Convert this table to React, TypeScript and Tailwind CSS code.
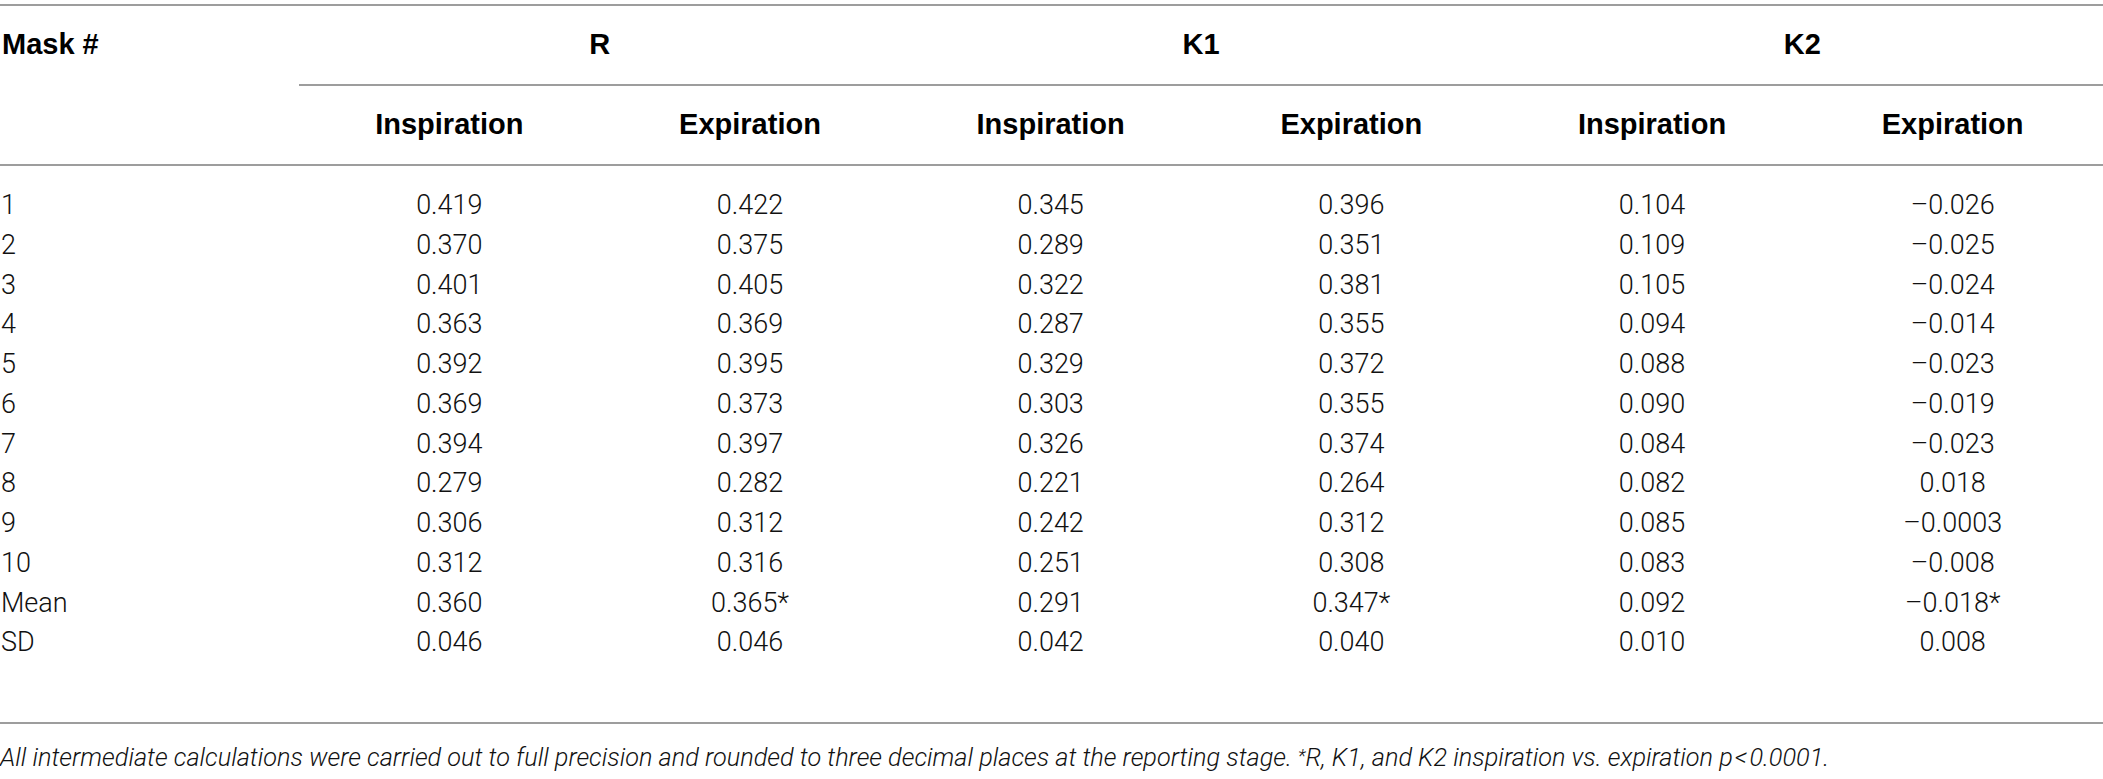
type Row = {
  label: string;
  values: string[];
};

const rows: Row[] = [
  { label: "1", values: ["0.419", "0.422", "0.345", "0.396", "0.104", "–0.026"] },
  { label: "2", values: ["0.370", "0.375", "0.289", "0.351", "0.109", "–0.025"] },
  { label: "3", values: ["0.401", "0.405", "0.322", "0.381", "0.105", "–0.024"] },
  { label: "4", values: ["0.363", "0.369", "0.287", "0.355", "0.094", "–0.014"] },
  { label: "5", values: ["0.392", "0.395", "0.329", "0.372", "0.088", "–0.023"] },
  { label: "6", values: ["0.369", "0.373", "0.303", "0.355", "0.090", "–0.019"] },
  { label: "7", values: ["0.394", "0.397", "0.326", "0.374", "0.084", "–0.023"] },
  { label: "8", values: ["0.279", "0.282", "0.221", "0.264", "0.082", "0.018"] },
  { label: "9", values: ["0.306", "0.312", "0.242", "0.312", "0.085", "–0.0003"] },
  { label: "10", values: ["0.312", "0.316", "0.251", "0.308", "0.083", "–0.008"] },
  { label: "Mean", values: ["0.360", "0.365*", "0.291", "0.347*", "0.092", "–0.018*"] },
  { label: "SD", values: ["0.046", "0.046", "0.042", "0.040", "0.010", "0.008"] },
];

const groups = ["R", "K1", "K2"];

export default function App() {
  return (
    <div className="w-[2103px] min-h-[779px] bg-white pt-[4px] text-black">
      {/* tabla */}
      <div className="border-t-2 border-[#9d9d9d]">
        {/* cabecera: grupos */}
        <div className="grid grid-cols-[299px_1fr] h-[80px]">
          <div className="flex items-center pl-[2px] pb-[3px] font-['Liberation_Sans',Arial,sans-serif] font-bold text-[29px]">
            Mask #
          </div>
          <div className="grid grid-cols-3 border-b-2 border-[#9d9d9d]">
            {groups.map((g) => (
              <div
                key={g}
                className="flex items-center justify-center font-['Liberation_Sans',Arial,sans-serif] font-bold text-[29px]"
              >
                {g}
              </div>
            ))}
          </div>
        </div>

        {/* cabecera: inspiración / expiración */}
        <div className="grid grid-cols-[299px_repeat(6,1fr)] h-[80px] border-b-2 border-[#9d9d9d] font-['Liberation_Sans',Arial,sans-serif] font-bold text-[29px]">
          <div />
          {groups.map((g) => (
            <div key={g} className="contents">
              <div className="flex items-center justify-center">Inspiration</div>
              <div className="flex items-center justify-center">Expiration</div>
            </div>
          ))}
        </div>

        {/* datos */}
        <div className="pt-[19px] pb-[60px] border-b-2 border-[#9d9d9d] font-['Roboto','Liberation_Sans',sans-serif] font-light text-[27px] text-[#111]">
          {rows.map((r) => (
            <div key={r.label} className="grid grid-cols-[299px_repeat(6,1fr)] h-[39.75px] items-center">
              <div className="pl-[1px]">{r.label}</div>
              {r.values.map((v, i) => (
                <div key={i} className="text-center">
                  {v}
                </div>
              ))}
            </div>
          ))}
        </div>
      </div>

      {/* nota */}
      <p className="pt-[17px] font-['Roboto','Liberation_Sans',sans-serif] font-light italic text-[25.3px] leading-[30px] text-[#111] whitespace-nowrap">
        All intermediate calculations were carried out to full precision and rounded to three decimal places at the
        reporting stage. <span className="text-[18px] align-[4px]">*</span>R, K1, and K2 inspiration vs. expiration p
        <span className="px-[2px]">&lt;</span>0.0001.
      </p>
    </div>
  );
}
